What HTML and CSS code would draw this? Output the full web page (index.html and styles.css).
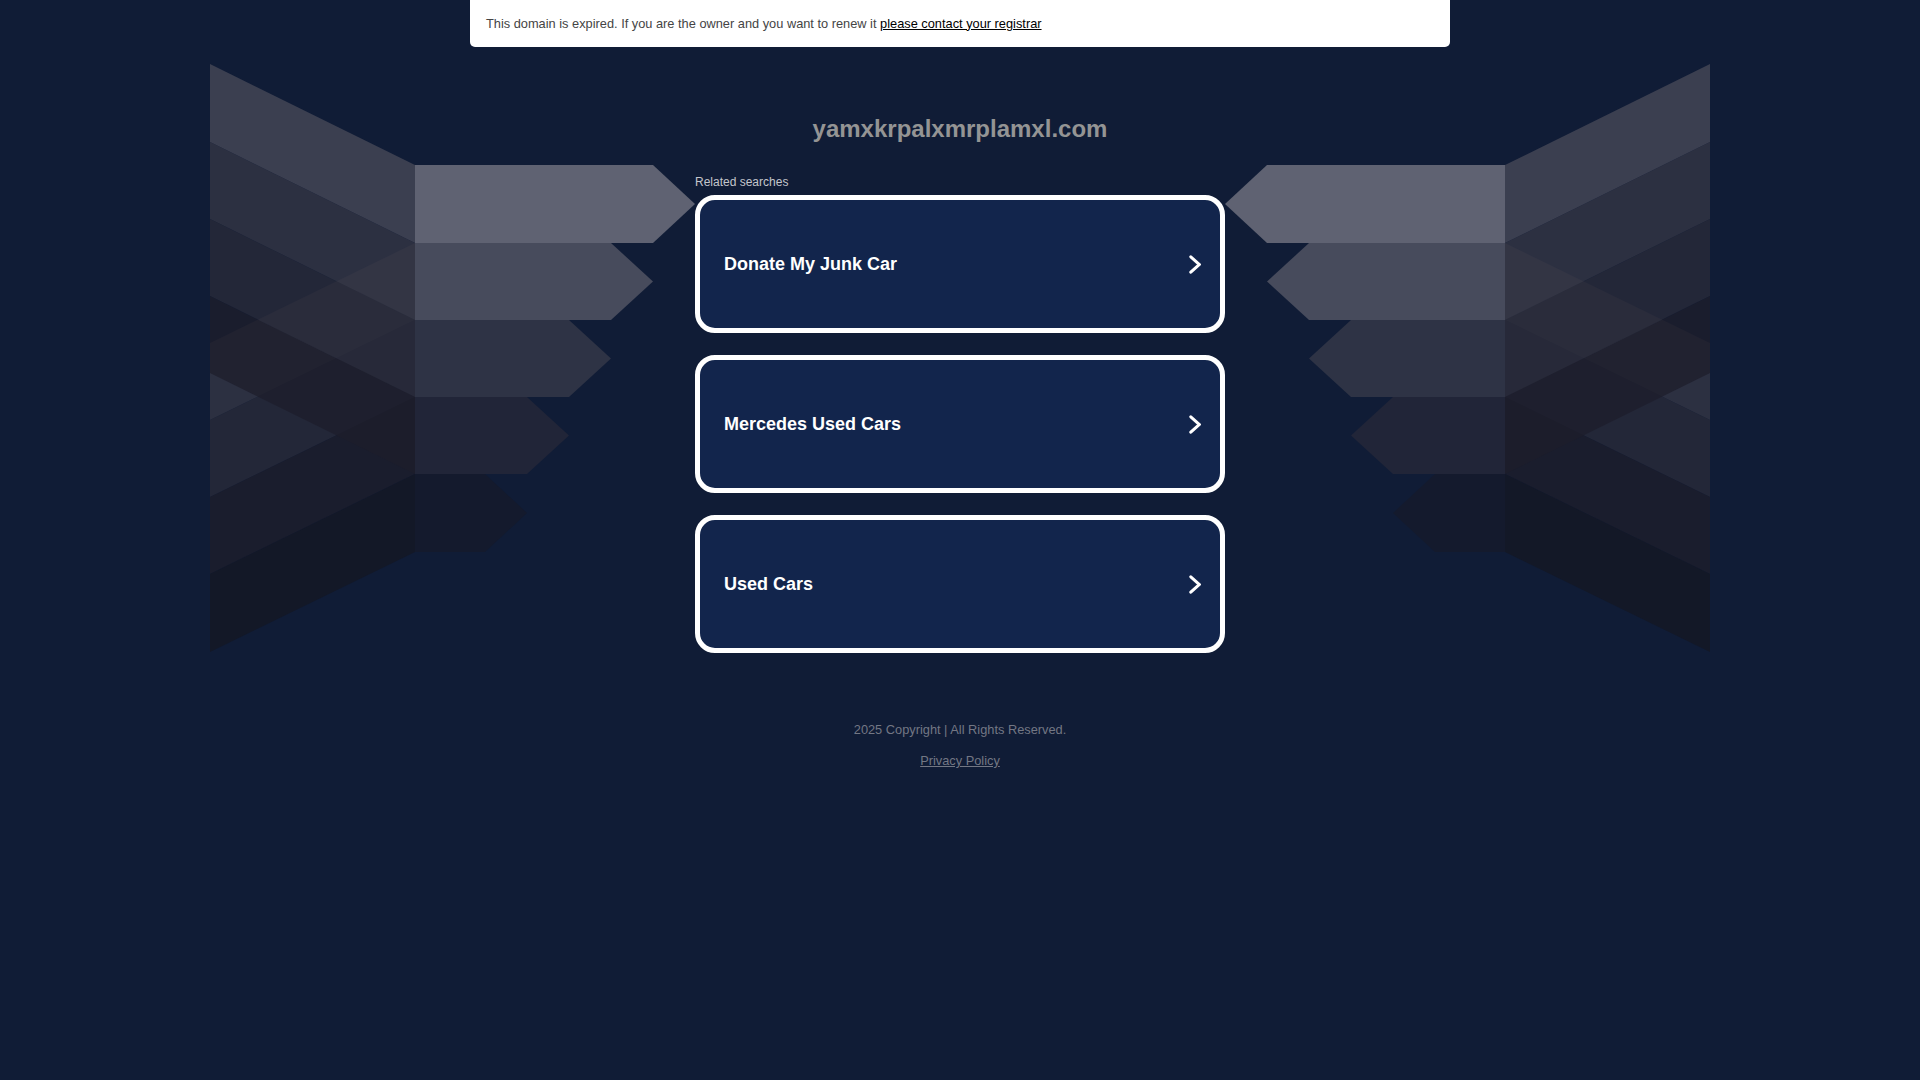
FILE: index.html
```html
<!DOCTYPE html>
<html lang="en">
<head>
<meta charset="utf-8">
<title>yamxkrpalxmrplamxl.com</title>
<link rel="stylesheet" href="styles.css">
</head>
<body>
<div class="banner">
  <span>This domain is expired. If you are the owner and you want to renew it <a href="#">please contact your registrar</a></span>
</div>
<main class="stage">
  <svg class="wing" width="485" height="588" viewBox="0 0 485 588" aria-hidden="true">
    <g class="flaps">
      <polygon points="205,179 0,279 0,356 205,256" fill="#353746"/>
      <polygon points="205,256 0,356 0,433 205,333" fill="#292b39"/>
      <polygon points="205,333 0,433 0,510 205,410" fill="#1d1e2b"/>
      <polygon points="205,410 0,510 0,588 205,488" fill="#141723"/>
      <polygon points="0,0 205,101 205,179 0,78" fill="#494b5a"/>
      <polygon points="0,78 205,179 205,256 0,155" fill="#353746"/>
      <polygon points="0,155 205,256 205,333 0,232" fill="#292b39"/>
      <polygon points="0,232 205,333 205,410 0,309" fill="#1d1e2b"/>
    </g>
    <polygon points="205,101 443,101 485,140 443,179 205,179" fill="#5f6272"/>
    <polygon points="205,179 401,179 443,217.5 401,256 205,256" fill="#474b5c"/>
    <polygon points="205,256 359,256 401,294.5 359,333 205,333" fill="#2e3345"/>
    <polygon points="205,333 317,333 359,371.5 317,410 205,410" fill="#212538"/>
    <polygon points="205,410 275,410 317,449 275,488 205,488" fill="#141a2d"/>
  </svg>
  <section class="center">
    <h1 class="domain">yamxkrpalxmrplamxl.com</h1>
    <p class="related">Related searches</p>
    <ul class="cards">
      <li><a class="card" href="#"><span>Donate My Junk Car</span><svg class="chev" width="12" height="19" viewBox="0 0 12 19"><polyline points="1.8,1.8 10.2,9.5 1.8,17.2"/></svg></a></li>
      <li><a class="card" href="#"><span>Mercedes Used Cars</span><svg class="chev" width="12" height="19" viewBox="0 0 12 19"><polyline points="1.8,1.8 10.2,9.5 1.8,17.2"/></svg></a></li>
      <li><a class="card" href="#"><span>Used Cars</span><svg class="chev" width="12" height="19" viewBox="0 0 12 19"><polyline points="1.8,1.8 10.2,9.5 1.8,17.2"/></svg></a></li>
    </ul>
  </section>
  <svg class="wing wing-right" width="485" height="588" viewBox="0 0 485 588" aria-hidden="true">
    <g class="flaps">
      <polygon points="205,179 0,279 0,356 205,256" fill="#353746"/>
      <polygon points="205,256 0,356 0,433 205,333" fill="#292b39"/>
      <polygon points="205,333 0,433 0,510 205,410" fill="#1d1e2b"/>
      <polygon points="205,410 0,510 0,588 205,488" fill="#141723"/>
      <polygon points="0,0 205,101 205,179 0,78" fill="#494b5a"/>
      <polygon points="0,78 205,179 205,256 0,155" fill="#353746"/>
      <polygon points="0,155 205,256 205,333 0,232" fill="#292b39"/>
      <polygon points="0,232 205,333 205,410 0,309" fill="#1d1e2b"/>
    </g>
    <polygon points="205,101 443,101 485,140 443,179 205,179" fill="#5f6272"/>
    <polygon points="205,179 401,179 443,217.5 401,256 205,256" fill="#474b5c"/>
    <polygon points="205,256 359,256 401,294.5 359,333 205,333" fill="#2e3345"/>
    <polygon points="205,333 317,333 359,371.5 317,410 205,410" fill="#212538"/>
    <polygon points="205,410 275,410 317,449 275,488 205,488" fill="#141a2d"/>
  </svg>
</main>
<footer class="footer">
  <p class="copy">2025 Copyright | All Rights Reserved.</p>
  <p class="privacy"><a href="#">Privacy Policy</a></p>
</footer>
</body>
</html>
```
FILE: styles.css
```css
html, body {
  margin: 0;
  padding: 0;
}
body {
  background: #101c36;
  font-family: "Liberation Sans", Arial, sans-serif;
  min-height: 100vh;
}
.banner {
  box-sizing: border-box;
  width: 980px;
  height: 47px;
  margin: 0 auto;
  padding: 0 16px;
  background: #ffffff;
  border-radius: 0 0 5px 5px;
  display: flex;
  align-items: center;
  font-size: 12.8px;
  line-height: 16px;
  color: #444444;
}
.banner a {
  color: #000000;
  text-decoration: underline;
}
.stage {
  display: flex;
  justify-content: center;
  align-items: flex-start;
  margin-top: 17px;
}
.wing {
  display: block;
  flex: 0 0 auto;
}
.wing .flaps polygon {
  opacity: 0.75;
}
.wing-right {
  transform: scaleX(-1);
}
.center {
  width: 530px;
  flex: 0 0 530px;
}
.domain {
  margin: 51px 0 0;
  font-size: 24px;
  line-height: 28px;
  font-weight: bold;
  color: #949494;
  text-align: center;
}
.related {
  margin: 32px 0 6px;
  font-size: 12px;
  line-height: 14px;
  color: #c4c6cc;
}
.cards {
  list-style: none;
  margin: 0;
  padding: 0;
  display: flex;
  flex-direction: column;
  gap: 22px;
}
.card {
  box-sizing: border-box;
  height: 138px;
  border: 5px solid #ffffff;
  border-radius: 20px;
  background: #12254c;
  display: flex;
  align-items: center;
  justify-content: space-between;
  padding: 0 19px 0 24px;
  color: #ffffff;
  font-size: 18px;
  font-weight: bold;
  text-decoration: none;
}
.chev {
  display: block;
}
.chev polyline {
  fill: none;
  stroke: #ffffff;
  stroke-width: 3;
  stroke-linecap: round;
  stroke-linejoin: miter;
}
.footer {
  margin-top: 69px;
  text-align: center;
  font-size: 12.8px;
  line-height: 16px;
  color: #737784;
}
.footer p {
  margin: 0;
}
.footer .privacy {
  margin-top: 15px;
}
.footer a {
  color: #737784;
  text-decoration: underline;
}
```
